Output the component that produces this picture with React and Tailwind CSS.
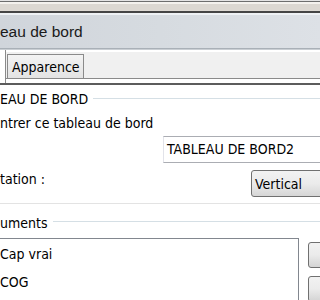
import React from "react";

const body = { fontFamily: '"DejaVu Sans Condensed", "DejaVu Sans", sans-serif', fontStretch: "condensed" };

const GroupHeader = ({ label, lineTop }) => (
  <div className="flex items-start">
    <span className="whitespace-nowrap leading-[16px]">{label}</span>
    <div className={`flex-1 h-px bg-[#d5dfe5] ml-[5px] ${lineTop}`} />
  </div>
);

const App = () => {
  return (
    <div
      className="w-[320px] h-[300px] overflow-hidden bg-white text-[14px] text-black"
      style={body}
    >
      {/* window frame */}
      <div className="h-px bg-[#e4e4e4]" />
      <div className="h-px bg-[#6e6e6e]" />
      <div className="h-[2px] bg-[#f4f2ee]" />
      <div className="h-[7px] bg-[#dcd8d2]" />
      <div className="h-[2px] bg-[#454545]" />
      <div className="h-[2px] bg-[#eef1f4]" />
      <div
        className="h-[33px] leading-[33px] bg-gradient-to-r from-[#d0d5db] via-[#d6dbe0] to-[#dde1e6] text-[15.5px] text-[#1a1a1a] whitespace-nowrap"
        style={{ fontFamily: '"Liberation Sans", Arial, sans-serif' }}
      >
        eau de bord
      </div>
      <div className="h-px bg-[#a9b0b7]" />
      <div className="h-px bg-[#c9ced3]" />

      {/* tabs */}
      <div className="flex h-[33px]">
        <div className="w-[6px] shrink-0 bg-white border-r border-[#8a8a8a]" />
        <div className="flex-1 flex flex-col">
          <div className="h-[28px] bg-[#f0f0f0] border-t-2 border-white flex items-end">
            <div className="ml-px h-[24px] w-[77px] border border-b-0 border-[#8a8a8a] bg-gradient-to-b from-[#f3f3f3] to-[#e3e3e3] pl-[4px] pt-px leading-[22px] whitespace-nowrap">
              Apparence
            </div>
          </div>
          <div className="h-px bg-[#8a8a8a]" />
          <div className="flex-1 bg-white" />
        </div>
      </div>
      <div className="h-[2px] bg-[#5c5c5c]" />

      {/* panel */}
      <div className="pt-[6px]">
        <GroupHeader label="EAU DE BORD" lineTop="mt-[7px]" />
        <div className="mt-[8px] leading-[16px] whitespace-nowrap">ntrer ce tableau de bord</div>
        <div className="mt-[5px] flex overflow-hidden">
          <div className="ml-[163px] w-[200px] shrink-0 h-[27px] border border-[#abadb3] border-l-[#e2e3ea] pl-[3px] leading-[25px] whitespace-nowrap">
            TABLEAU DE BORD2
          </div>
        </div>
        <div className="mt-[7px] flex overflow-hidden">
          <div className="w-[251px] shrink-0 mt-px leading-[16px] whitespace-nowrap">tation :</div>
          <div className="w-[120px] shrink-0 h-[27px] rounded-[3px] border border-[#707070] bg-gradient-to-b from-[#f2f2f2] via-[#ebebeb] to-[#d6d6d6] pl-[3px] pt-px leading-[25px]">
            Vertical
          </div>
        </div>
        <div className="mt-[6px] h-px bg-[#e3e3e3]" />
        <div className="mt-[11px]">
          <GroupHeader label="uments" lineTop="mt-[6px]" />
        </div>
        <div className="mt-[7px] flex overflow-hidden">
          <div className="w-[299px] shrink-0 h-[80px] border-t border-r border-[#82878f] pt-[7px]">
            <div className="leading-[16px] whitespace-nowrap">Cap vrai</div>
            <div className="mt-[12px] leading-[16px] whitespace-nowrap">COG</div>
          </div>
          <div className="ml-[9px] w-[60px] shrink-0 pt-[4px] flex flex-col gap-[8px]">
            <div className="h-[26px] rounded-[3px] border border-[#707070] bg-gradient-to-b from-[#f2f2f2] via-[#ebebeb] to-[#d4d4d4]" />
            <div className="h-[26px] rounded-[3px] border border-[#707070] bg-gradient-to-b from-[#f2f2f2] via-[#ebebeb] to-[#d4d4d4]" />
          </div>
        </div>
      </div>
    </div>
  );
};

export default App;
